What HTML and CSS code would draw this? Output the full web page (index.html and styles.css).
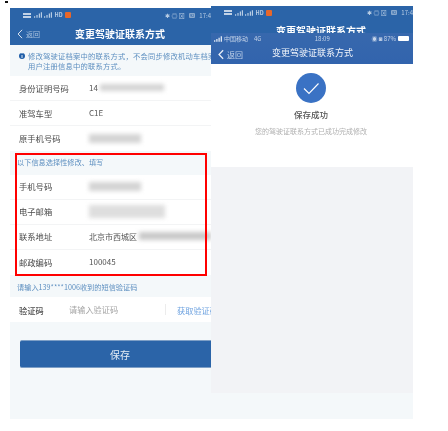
FILE: index.html
```html
<!DOCTYPE html>
<html lang="zh-CN">
<head>
<meta charset="utf-8">
<title>变更驾驶证联系方式</title>
<link rel="stylesheet" href="styles.css">
</head>
<body>
<div class="tick"></div>
<main class="stage">
  <section class="phone left">
    <div class="blue-top">
      <div class="status">
        <div class="status-l">
          <span class="stack"><i></i><i></i></span>
          <svg class="sig" viewBox="0 0 10 7"><path d="M0 7h1.500V5H0zM3 7h1.500V3.500H3zM6 7h1.500V1.500H6zM8.500 7H10V0H8.500z"/></svg>
          <svg class="sig" viewBox="0 0 10 7"><path d="M0 7h1.500V5H0zM3 7h1.500V3.500H3zM6 7h1.500V1.500H6zM8.500 7H10V0H8.500z"/></svg>
          <span class="hd">HD</span>
          <span class="mi"></span>
        </div>
        <div class="status-r"><span>✱ ◎ ⊠</span><span class="batt">92</span><span>17:4</span></div>
      </div>
      <div class="nav">
        <svg class="back" viewBox="0 0 7 12"><path d="M6 1 1.200 6 6 11"/></svg>
        <span class="back-text">返回</span>
        <span class="title">变更驾驶证联系方式</span>
      </div>
    </div>
    <div class="notice">
      <span class="info">i</span>
      <p>修改驾驶证档案中的联系方式，不会同步修改机动车档案<br>用户注册信息中的联系方式。</p>
    </div>
    <div class="rows">
      <div class="row"><span class="key">身份证明号码</span><span class="val">14</span><span class="smear s-id"></span></div>
      <div class="row"><span class="key">准驾车型</span><span class="val">C1E</span></div>
      <div class="row"><span class="key">原手机号码</span><span class="smear s-phone"></span></div>
    </div>
    <div class="section first">以下信息选择性修改、填写</div>
    <div class="rows">
      <div class="row"><span class="key">手机号码</span><span class="smear s-phone"></span></div>
      <div class="row"><span class="key">电子邮箱</span><span class="smear s-mail"></span></div>
      <div class="row"><span class="key">联系地址</span><span class="val">北京市西城区</span><span class="smear s-addr"></span></div>
      <div class="row"><span class="key">邮政编码</span><span class="val">100045</span></div>
    </div>
    <div class="section second">请输入139****1006收到的短信验证码</div>
    <div class="code">
      <span class="code-key">验证码</span>
      <span class="code-ph">请输入验证码</span>
      <span class="code-btn">获取验证码</span>
    </div>
    <button class="save">保存</button>
  </section>

  <section class="phone right">
    <div class="old-top">
      <div class="status">
        <div class="status-l">
          <span class="stack"><i></i><i></i></span>
          <svg class="sig" viewBox="0 0 10 7"><path d="M0 7h1.500V5H0zM3 7h1.500V3.500H3zM6 7h1.500V1.500H6zM8.500 7H10V0H8.500z"/></svg>
          <svg class="sig" viewBox="0 0 10 7"><path d="M0 7h1.500V5H0zM3 7h1.500V3.500H3zM6 7h1.500V1.500H6zM8.500 7H10V0H8.500z"/></svg>
          <span class="hd">HD</span>
          <span class="mi"></span>
        </div>
        <div class="status-r"><span>✱ ◎ ⊠</span><span class="batt">92</span><span>17:4</span></div>
      </div>
      <div class="peek">变更驾驶证联系方式</div>
    </div>
    <div class="new-top">
      <div class="status2">
        <div class="carrier">
          <svg class="bars" viewBox="0 0 9 6"><path d="M0 6h1.500V4.500H0zM2.500 6H4V3H2.500zM5 6h1.500V1.500H5zM7.500 6H9V0H7.500z"/></svg>
          <span>中国移动</span><span class="net">4G</span>
        </div>
        <span class="clock">18:09</span>
        <div class="power"><span>◉ ◙ 87%</span><span class="batt2"></span></div>
      </div>
      <div class="nav2">
        <svg class="back2" viewBox="0 0 7 12"><path d="M6 1 1.200 6 6 11"/></svg>
        <span class="back-text2">返回</span>
        <span class="title2">变更驾驶证联系方式</span>
      </div>
    </div>
    <div class="result">
      <div class="ok">
        <svg viewBox="0 0 30 30"><path d="M8 15.500 13 20.500 22.500 10.500"/></svg>
      </div>
      <div class="ok-title">保存成功</div>
      <div class="ok-sub">您的驾驶证联系方式已成功完成修改</div>
    </div>
    <div class="gray"></div>
    <div class="foot"></div>
  </section>
</main>
<div class="highlight"></div>
</body>
</html>
```
FILE: styles.css
```css
* { box-sizing: border-box; }
html, body { margin: 0; padding: 0; background: #fff; }
body { width: 448px; height: 431px; overflow: hidden; position: relative; font-family: "Noto Sans CJK SC", "Liberation Sans", sans-serif; }
.tick { position: absolute; left: 5px; top: 1px; width: 3px; height: 2px; background: #111; }
.stage { display: flex; padding: 6px 0 0 10px; height: 419px; }
.phone { overflow: hidden; height: 413px; filter: blur(0.35px); }
.left { width: 201px; margin-top: 2px; height: 411px; background: #f4f8fa; }
.right { width: 202px; background: #fff; display: flex; flex-direction: column; }

.blue-top { height: 37px; background: #2b64a8; }
.status { height: 14px; display: flex; justify-content: space-between; align-items: center; padding: 0 0 0 13px; color: #b9cde4; font-size: 6px; }
.status-l { display: flex; align-items: center; gap: 2.500px; }
.stack { display: flex; flex-direction: column; gap: 1px; width: 8px; }
.stack i { display: block; height: 2px; background: #c2d2e6; }
.sig { width: 8px; height: 6px; fill: #b9cde4; }
.hd { font-size: 5.500px; font-weight: 700; line-height: 6px; }
.mi { width: 6px; height: 6px; background: #e8672a; border-radius: 1px; }
.status-r { display: flex; align-items: center; gap: 4px; white-space: nowrap; }
.batt { background: #8aa9cd; color: #2b64a8; border-radius: 1px; padding: 0 1px; line-height: 5px; font-size: 4px; }
.nav { height: 23px; display: flex; align-items: center; position: relative; padding-left: 7px; }
.back { width: 6px; height: 10px; fill: none; stroke: #fff; stroke-width: 1px; }
.back-text { margin-left: 3px; font-size: 7px; color: #a9c2de; }
.title { position: absolute; left: 65px; top: 5px; font-size: 10px; line-height: 14px; font-weight: 700; color: #fff; white-space: nowrap; }

.notice { height: 31px; padding: 6px 0 0 9px; display: flex; gap: 3px; }
.info { flex: none; width: 6px; height: 6px; margin-top: 2px; border-radius: 50%; background: #1f5ea8; color: #fff; font-size: 5px; line-height: 6px; text-align: center; font-weight: 700; }
.notice p { margin: 0; font-size: 7.300px; line-height: 10px; color: #5d8fc0; white-space: nowrap; letter-spacing: 0.2px; }

.rows { background: #fff; }
.row { height: 25px; display: flex; align-items: center; padding: 0 0 1px 9px; border-bottom: 1px solid #f3f4f5; white-space: nowrap; }
.row:last-child { border-bottom: 0; }
.key { width: 70px; flex: none; font-size: 8.300px; color: #4a4a4a; }
.val { font-size: 8px; color: #555; }
.smear { display: block; background: #d4d4d4; filter: blur(2px); }
.s-id { width: 64px; height: 7px; margin-left: 2px; }
.s-phone { width: 52px; height: 9px; }
.s-mail { width: 76px; height: 13px; background: #dedede; }
.s-addr { flex: 1; height: 8px; margin-left: 2px; background: #c9c9c9; }

.section { font-size: 7.200px; color: #5d8fc0; padding-left: 7px; white-space: nowrap; }
.first { height: 23.500px; line-height: 23px; }
.second { height: 22.500px; line-height: 24px; }
.code { height: 25px; background: #fff; display: flex; align-items: center; padding-left: 9px; white-space: nowrap; }
.code-key { width: 50px; flex: none; font-size: 8.200px; font-weight: 500; color: #4d4d4d; }
.code-ph { width: 97px; flex: none; font-size: 8.200px; color: #a5a5a5; border-right: 1px solid #ececec; height: 11px; line-height: 11px; }
.code-btn { margin-left: 11px; font-size: 8.200px; color: #6fa3e0; }
.save { display: block; width: 200px; height: 28px; margin: 18px 0 0 10px; border: 0; border-top: 1px solid #7e9fc6; border-bottom: 1px solid #7e9fc6; border-radius: 2px 0 0 2px; background: #2b64a8; color: #e4ecf5; font: 10px "Noto Sans CJK SC", sans-serif; padding: 0; text-align: left; text-indent: 90px; }

.old-top { height: 27px; background: #2b64a8; overflow: hidden; flex: none; }
.old-top .status { height: 13px; }
.peek { text-align: center; font-size: 10px; line-height: 14px; font-weight: 700; color: #fff; margin-top: 5px; padding-left: 18px; }
.new-top { height: 31px; background: linear-gradient(#3768ad, #3264ad); flex: none; }
.status2 { height: 11px; display: flex; justify-content: space-between; align-items: center; padding: 0 4px 0 3px; color: #c5d4e9; font-size: 6px; white-space: nowrap; }
.carrier { width: 74px; display: flex; align-items: center; gap: 2px; }
.bars { width: 8px; height: 6px; fill: #dce6f3; }
.net { margin-left: 4px; }
.clock { width: 30px; }
.power { display: flex; align-items: center; gap: 2px; }
.batt2 { width: 11px; height: 5px; background: #fff; border-radius: 1px; }
.nav2 { height: 20px; display: flex; align-items: center; position: relative; padding-left: 7px; }
.back2 { width: 6px; height: 11px; fill: none; stroke: #e8eef7; stroke-width: 1.500px; }
.back-text2 { margin-left: 3px; font-size: 8px; color: #c2d3ea; }
.title2 { position: absolute; left: 61px; top: 2px; font-size: 9px; line-height: 14px; color: #f0f4fa; white-space: nowrap; }

.result { height: 103px; flex: none; display: flex; flex-direction: column; align-items: center; padding: 9px 2px 0 0; }
.ok { width: 30px; height: 30px; border-radius: 50%; background: #3a72c4; }
.ok svg { display: block; width: 30px; height: 30px; fill: none; stroke: #fff; stroke-width: 1.100px; }
.ok-title { margin-top: 4px; font-size: 8.500px; line-height: 14px; color: #555; font-weight: 500; }
.ok-sub { margin-top: 5px; font-size: 7px; line-height: 10px; color: #b0b0b0; white-space: nowrap; }
.gray { height: 226px; background: #f2f3f6; flex: none; }
.foot { height: 26px; background: #f4f8fa; flex: none; }

.highlight { position: absolute; left: 15px; top: 153px; width: 192px; height: 123px; border: 2px solid #f00; }
```
